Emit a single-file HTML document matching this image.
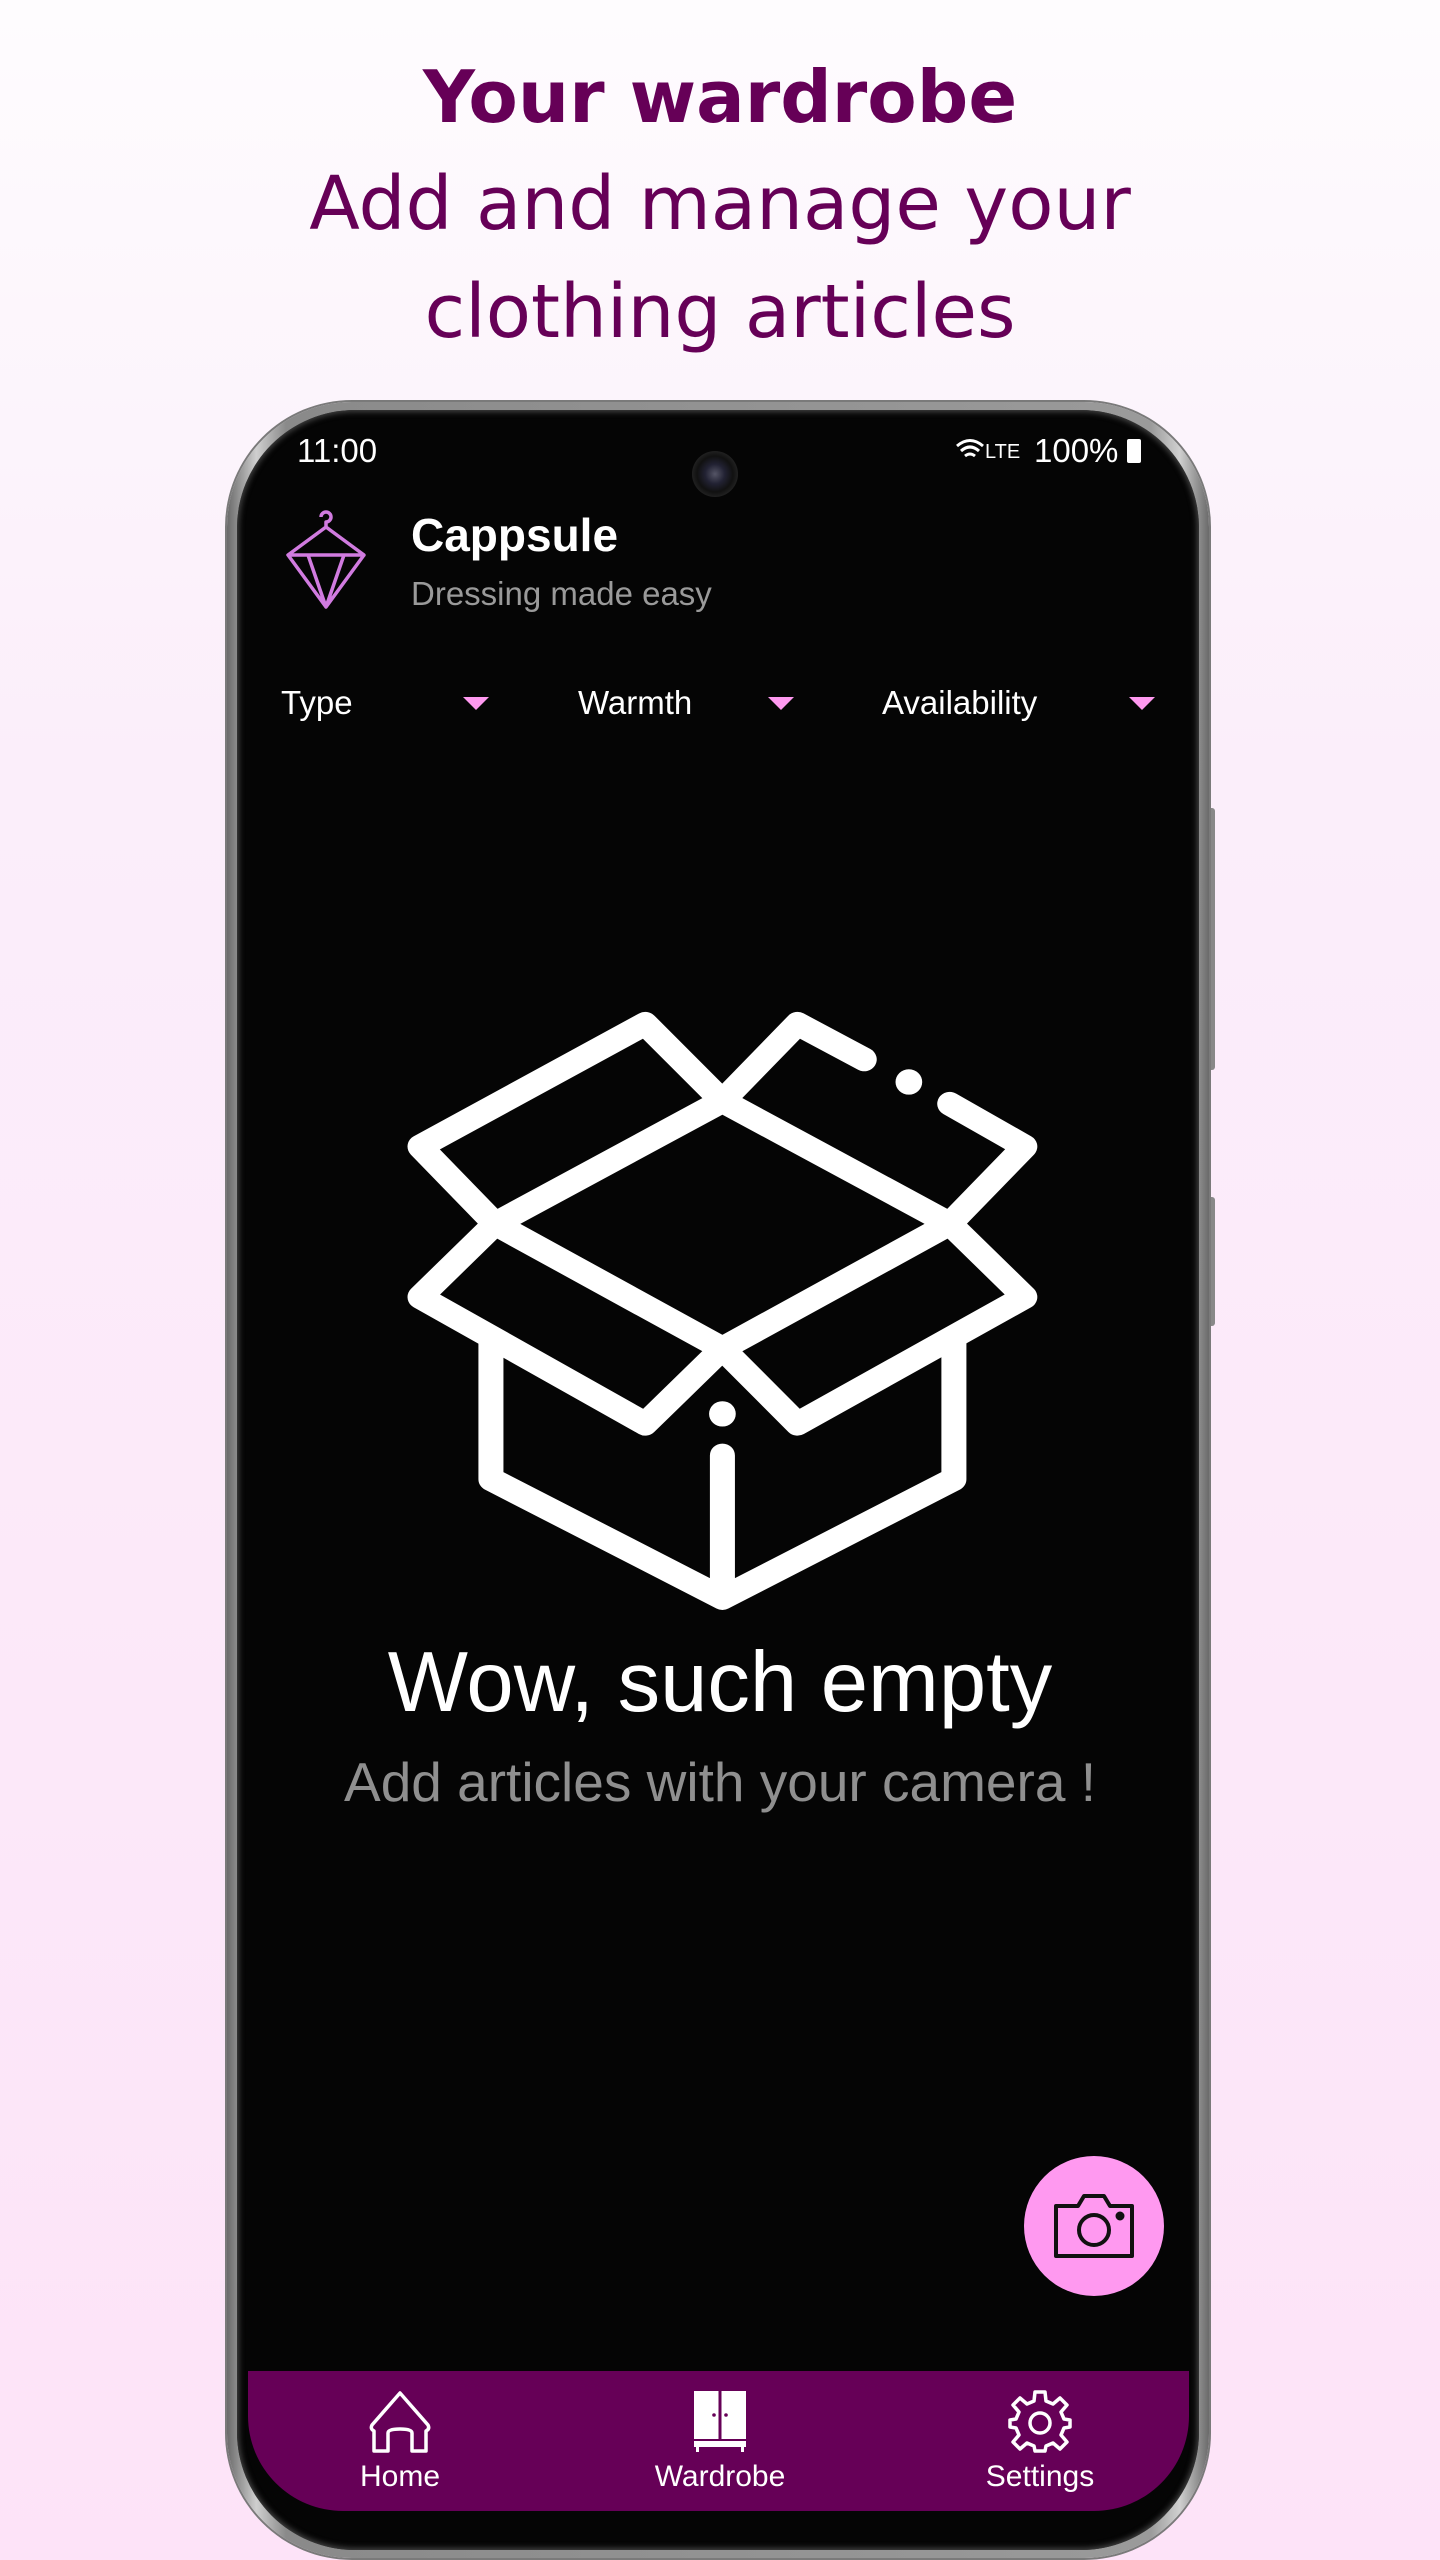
<!DOCTYPE html>
<html><head><meta charset="utf-8">
<style>
*{margin:0;padding:0;box-sizing:border-box}
body{width:1440px;height:2560px;overflow:hidden;background:linear-gradient(#fefcfe 0%,#fbeefa 30%,#fde3f8 100%);font-family:"Liberation Sans",sans-serif;position:relative}
.h{position:absolute;left:0;width:1440px;text-align:center;color:#660057;font-family:"DejaVu Sans","Liberation Sans",sans-serif}
.phone{position:absolute;left:227px;top:402px;width:982px;height:2156px;border-radius:125px;background:linear-gradient(90deg,#6a6a6a,#cfcfcf 3%,#8a8a8a 6%,#9a9a9a 94%,#d0d0d0 97%,#6a6a6a);box-shadow:0 0 0 2px #7a7a7a}
.bez{position:absolute;left:10px;top:8px;right:10px;bottom:8px;border-radius:118px;background:#050505;box-shadow:inset 0 0 6px 2px #444}
.t{position:absolute;color:#fff;white-space:nowrap}
.btn{position:absolute;left:1209px;width:6px;background:#888;border-radius:0 3px 3px 0}
</style></head><body>
<div class="h" style="top:47px;font-size:72px;font-weight:bold;line-height:100px">Your wardrobe</div>
<div class="h" style="top:150px;font-size:74px;line-height:108px">Add and manage your<br>clothing articles</div>
<div class="btn" style="top:808px;height:262px"></div>
<div class="btn" style="top:1197px;height:129px"></div>
<div class="phone"><div class="bez"></div></div>
<div class="t" style="left:297px;top:432px;font-size:33px">11:00</div>
<div style="position:absolute;left:692px;top:451px;width:46px;height:46px;border-radius:50%;background:radial-gradient(circle,#556 0,#223 30%,#111 55%,#2a2a2a 80%,#000 100%)"></div>
<svg style="position:absolute;left:955px;top:436px" width="76" height="30" viewBox="0 0 76 30"><path d="M2 10 Q15 -1 28 10 M6 15 Q15 7 24 15 M10 20 Q15 16 20 20" stroke="#fff" stroke-width="3" fill="none"/><text x="30" y="22" fill="#fff" font-size="20" font-family="Liberation Sans">LTE</text></svg>
<div class="t" style="left:1034px;top:432px;font-size:33px">100%</div>
<div style="position:absolute;left:1127px;top:439px;width:14px;height:24px;background:#fff;border-radius:2px"></div>
<svg style="position:absolute;left:284px;top:505px" width="84" height="106" viewBox="0 0 84 106" fill="none" stroke="#d17be0" stroke-width="3.5" stroke-linejoin="round"><path d="M37 12 a5 5 0 1 1 5 5 v5 M42 22 L4 50 H80 Z M4 50 L42 102 L80 50 M24 50 L42 102 L60 50"/></svg>
<div class="t" style="left:411px;top:508px;font-size:46px;font-weight:bold">Cappsule</div>
<div class="t" style="left:411px;top:575px;font-size:33px;color:#9a9a9a">Dressing made easy</div>
<div class="t" style="left:281px;top:684px;font-size:33px">Type</div>
<div class="t" style="left:578px;top:684px;font-size:33px">Warmth</div>
<div class="t" style="left:882px;top:684px;font-size:33px">Availability</div>
<svg style="position:absolute;left:0;top:0" width="1440" height="800"><g fill="#ff99f0"><path d="M463 697h26l-13 13z"/><path d="M768 697h26l-13 13z"/><path d="M1129 697h26l-13 13z"/></g></svg>
<svg style="position:absolute;left:395px;top:1000px" width="654" height="621" viewBox="0 0 1568 1568" preserveAspectRatio="none" fill="none" stroke="#fff" stroke-width="60" stroke-linecap="round" stroke-linejoin="round">
<path d="M785 255 L1330 565 L785 880 L240 565 Z"/>
<path d="M240 565 L60 370 L600 60 L785 255"/>
<path d="M785 255 L965 60 L1125 150 M1330 262 L1510 370 L1330 565"/>
<path d="M240 565 L60 750 L600 1070 L785 880 L965 1070 L1510 750 L1330 565"/>
<path d="M230 865 L230 1210 L785 1510 L1340 1210 L1340 865 M785 1150 L785 1500"/>
<circle cx="1232" cy="207" r="32" fill="#fff" stroke="none"/>
<circle cx="785" cy="1045" r="32" fill="#fff" stroke="none"/>
</svg>
<div class="t" style="left:0;width:1440px;text-align:center;top:1634px;font-size:85px">Wow, such empty</div>
<div class="t" style="left:0;width:1440px;text-align:center;top:1750px;font-size:55px;color:#8f8f8f">Add articles with your camera !</div>
<div style="position:absolute;left:1024px;top:2156px;width:140px;height:140px;border-radius:50%;background:#ff99f0"></div>
<svg style="position:absolute;left:1052px;top:2190px" width="84" height="72" viewBox="0 0 84 72" fill="none" stroke="#111" stroke-width="4" stroke-linejoin="round"><path d="M4 16 H26 L32 6 H52 L58 16 H80 V66 H4 Z"/><circle cx="42" cy="40" r="15"/><circle cx="68" cy="26" r="2.5" fill="#111"/></svg>
<div style="position:absolute;left:248px;top:2371px;width:941px;height:140px;background:#660057;border-radius:0 0 95px 95px"></div>
<svg style="position:absolute;left:366px;top:2389px" width="68" height="64" viewBox="0 0 68 64" fill="none" stroke="#fff" stroke-width="3.5" stroke-linejoin="round"><path d="M34 4 L62 36 Q64 40 60 42 V62 H46 V44 Q46 40 34 40 Q22 40 22 44 V62 H8 V42 Q4 40 6 36 Z"/></svg>
<svg style="position:absolute;left:692px;top:2389px" width="56" height="64" viewBox="0 0 56 64" fill="#fff"><path d="M2 2 H54 V50 H2 Z" /><rect x="26.5" y="2" width="3" height="48" fill="#660057"/><circle cx="22" cy="26" r="1.8" fill="#660057"/><circle cx="34" cy="26" r="1.8" fill="#660057"/><rect x="2" y="52" width="52" height="6"/><rect x="4" y="58" width="3" height="5"/><rect x="49" y="58" width="3" height="5"/></svg>
<svg style="position:absolute;left:1008px;top:2389px" width="64" height="64" viewBox="0 0 64 64" fill="none" stroke="#fff" stroke-width="3.5" stroke-linejoin="round"><path d="M27 3 H37 L38 12 L45 15 L52 9 L59 16 L53 23 L56 30 L62 31 V38 L56 39 L53 46 L59 53 L52 60 L45 54 L38 57 L37 62 H27 L26 57 L19 54 L12 60 L5 53 L11 46 L8 39 L2 38 V31 L8 30 L11 23 L5 16 L12 9 L19 15 L26 12 Z"/><circle cx="32" cy="34" r="10"/></svg>
<div class="t" style="left:300px;width:200px;text-align:center;top:2460px;font-size:30px">Home</div>
<div class="t" style="left:620px;width:200px;text-align:center;top:2460px;font-size:30px">Wardrobe</div>
<div class="t" style="left:940px;width:200px;text-align:center;top:2460px;font-size:30px">Settings</div>
</body></html>
